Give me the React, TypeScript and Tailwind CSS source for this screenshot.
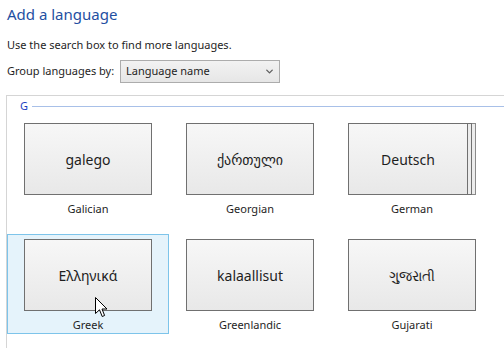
import { ChevronDown } from "lucide-react";

type Lang = { native: string; name: string; stacked?: boolean; selected?: boolean };

const LANGS: Lang[] = [
  { native: "galego", name: "Galician" },
  { native: "ქართული", name: "Georgian" },
  { native: "Deutsch", name: "German", stacked: true },
  { native: "Ελληνικά", name: "Greek", selected: true },
  { native: "kalaallisut", name: "Greenlandic" },
  { native: "ગુજરાતી", name: "Gujarati" },
];

const FONT = { fontFamily: '"Noto Sans", "DejaVu Sans", sans-serif' };

function Tile({ lang }: { lang: Lang }) {
  const face =
    "h-[72px] border border-[#707070] bg-gradient-to-b from-[#f7f7f7] to-[#e8e8e8] flex items-center justify-center text-[14px] text-[#1e1e1e]";
  return (
    <div
      className={`h-[100px] w-[162px] border flex flex-col items-center ${
        lang.selected ? "border-[#7dc4ea] bg-[#e5f3fb]" : "border-transparent"
      }`}
    >
      <div className="mt-[4px] flex w-[128px]">
        {lang.stacked ? (
          <>
            <div className={`${face} w-[120px]`}>{lang.native}</div>
            <div className="h-[72px] w-[4px] border-y border-r border-[#707070] bg-[#ececec]" />
            <div className="h-[72px] w-[4px] border-y border-r border-[#8a8a8a] bg-[#ececec]" />
          </>
        ) : (
          <div className={`${face} w-[128px]`}>{lang.native}</div>
        )}
      </div>
      <div className="mt-[6px] whitespace-nowrap text-[11px] leading-[16px] text-[#1e1e1e]">
        {lang.name}
      </div>
    </div>
  );
}

export default function App() {
  return (
    <div className="relative h-[348px] w-[504px] overflow-hidden bg-white" style={FONT}>
      <h1 className="mt-[4px] px-[7px] text-[15px] leading-[20px] text-[#1f50a2]">Add a language</h1>
      <p className="mt-[13px] px-[7px] text-[11px] leading-[16px] text-[#1e1e1e]">
        Use the search box to find more languages.
      </p>
      <div className="mt-[7px] flex items-center px-[7px] text-[11px] text-[#1e1e1e]">
        <span className="w-[113px] shrink-0 whitespace-nowrap">Group languages by:</span>
        <div className="flex h-[23px] w-[160px] items-center justify-between border border-[#acacac] bg-gradient-to-b from-[#f2f2f2] to-[#e6e6e6] pl-[5px] pr-[4px]">
          <span>Language name</span>
          <ChevronDown size={11} strokeWidth={3} className="text-[#606060]" />
        </div>
      </div>

      <div className="ml-[6px] mt-[12px] h-[300px] w-[520px] border-l border-t border-[#d5d5d5]">
        <div className="flex h-[20px] items-center pl-[13px]">
          <span className="text-[11px] text-[#1a3fc0]">G</span>
          <div className="ml-[4px] h-px flex-1 bg-[#a8c0e8]" />
        </div>
        <div className="mt-[2px] grid grid-cols-[162px_162px_162px] gap-y-[16px]">
          {LANGS.map((l) => (
            <Tile key={l.name} lang={l} />
          ))}
        </div>
      </div>

      <svg
        className="absolute left-[95px] top-[297px]"
        width="13"
        height="21"
        viewBox="0 0 13 21"
      >
        <path
          d="M0.5 0.5 L0.5 16.5 L4.5 12.8 L7.2 19.5 L9.6 18.5 L7 12 L12 12 Z"
          fill="white"
          stroke="black"
          strokeWidth="1"
          strokeLinejoin="round"
        />
      </svg>
    </div>
  );
}
